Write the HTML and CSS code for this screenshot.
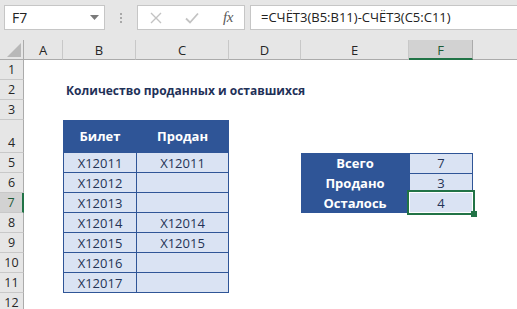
FILE: index.html
```html
<!DOCTYPE html>
<html lang="ru">
<head>
<meta charset="utf-8">
<title>Excel</title>
<link rel="stylesheet" href="styles.css">
</head>
<body>
<div class="app">
  <div class="fbar">
    <div class="namebox"><span>F7</span>
      <svg class="dd" width="9" height="5" viewBox="0 0 9 5"><path d="M0 0H9L4.5 5Z" fill="#7a7a7a"/></svg>
    </div>
    <div class="grip"><i></i><i></i><i></i></div>
    <div class="fbtns">
      <svg class="ic-x" width="12" height="12" viewBox="0 0 12 12"><path d="M1 1L11 11M11 1L1 11" stroke="#c3c3c3" stroke-width="1.4" fill="none"/></svg>
      <svg class="ic-ok" width="14" height="12" viewBox="0 0 14 12"><path d="M1 6.5L5 10.5L13 1.5" stroke="#c3c3c3" stroke-width="1.8" fill="none"/></svg>
      <span class="fx">fx</span>
    </div>
    <div class="finput">=СЧЁТ3(B5:B11)-СЧЁТ3(C5:C11)</div>
  </div>

  <div class="sheet">
    <div class="corner"><svg width="14" height="14" viewBox="0 0 14 14"><path d="M14 0V14H0Z" fill="#b8b8b8"/></svg></div>
    <div class="ch c-a">A</div>
    <div class="ch c-b">B</div>
    <div class="ch c-c">C</div>
    <div class="ch c-d">D</div>
    <div class="ch c-e">E</div>
    <div class="ch c-f ch-sel">F</div>
    <div class="ch c-g ch-last"></div>

    <div class="rh r1">1</div>
    <div class="rh r2">2</div>
    <div class="rh r3">3</div>
    <div class="rh r4">4</div>
    <div class="rh r5">5</div>
    <div class="rh r6">6</div>
    <div class="rh r7 rh-sel">7</div>
    <div class="rh r8">8</div>
    <div class="rh r9">9</div>
    <div class="rh r10">10</div>
    <div class="rh r11">11</div>
    <div class="rh r12">12</div>

    <div class="title">Количество проданных и оставшихся</div>

    <div class="tickets">
      <div class="th">Билет</div>
      <div class="th">Продан</div>
      <div class="td">X12011</div><div class="td">X12011</div>
      <div class="td">X12012</div><div class="td"></div>
      <div class="td">X12013</div><div class="td"></div>
      <div class="td">X12014</div><div class="td">X12014</div>
      <div class="td">X12015</div><div class="td">X12015</div>
      <div class="td">X12016</div><div class="td"></div>
      <div class="td">X12017</div><div class="td"></div>
    </div>

    <div class="summary">
      <div class="lbl">Всего</div><div class="val">7</div>
      <div class="lbl">Продано</div><div class="val">3</div>
      <div class="lbl">Осталось</div><div class="val sel">4</div>
    </div>
  </div>
</div>
</body>
</html>
```
FILE: styles.css
```css
* { box-sizing: border-box; }
html, body { margin: 0; padding: 0; }
body {
  width: 517px;
  height: 309px;
  overflow: hidden;
  background: #ffffff;
  font-family: "Open Sans", "Noto Sans", sans-serif;
}

.app { width: 517px; }

/* formula bar */
.fbar {
  display: flex;
  align-items: flex-start;
  height: 40px;
  padding-top: 5px;
  background: #e6e6e6;
}
.namebox {
  margin-left: 4px;
  width: 101px;
  height: 25px;
  border: 1px solid #c6c6c6;
  background: #fff;
  display: flex;
  align-items: center;
  padding-left: 7px;
  font-size: 14px;
  color: #222;
}
.namebox .dd { margin-left: auto; margin-right: 5px; }
.grip {
  width: 32px;
  height: 25px;
  display: flex;
  flex-direction: column;
  align-items: center;
  justify-content: center;
  gap: 2px;
}
.grip i {
  display: block;
  width: 2px;
  height: 2px;
  background: #a8a8a8;
}
.fbtns {
  width: 108px;
  height: 25px;
  border: 1px solid #c6c6c6;
  background: #fff;
  display: flex;
  align-items: center;
  padding-left: 12px;
}
.ic-ok { margin-left: 23px; }
.fx {
  margin-left: 24px;
  font-family: "Liberation Serif", "DejaVu Serif", serif;
  font-style: italic;
  font-size: 15px;
  color: #5a5a5a;
  letter-spacing: -0.5px;
}
.finput {
  flex: 1;
  margin-left: 5px;
  height: 25px;
  border: 1px solid #c6c6c6;
  border-right: none;
  background: #fff;
  padding-left: 10px;
  font-size: 13px;
  line-height: 22px;
  color: #222;
  white-space: nowrap;
}

/* sheet grid */
.sheet {
  display: grid;
  grid-template-columns: 24px 39px 73px 93px 72px 108px 64px 1fr;
  grid-template-rows: 20px 20px 20px 20px 33px repeat(8, 20px);
  background: #fff;
}
.corner {
  grid-column: 1;
  grid-row: 1;
  background: #e6e6e6;
  border-right: 1px solid #ababab;
  border-bottom: 1px solid #ababab;
  display: flex;
  align-items: flex-end;
  justify-content: flex-end;
  padding: 0 2px 2px 0;
}
.ch {
  grid-row: 1;
  background: #e6e6e6;
  border-right: 1px solid #c8c8c8;
  border-bottom: 1px solid #ababab;
  display: flex;
  align-items: center;
  justify-content: center;
  font-size: 13px;
  color: #262626;
  padding-top: 1px;
}
.c-a { grid-column: 2; }
.c-b { grid-column: 3; }
.c-c { grid-column: 4; }
.c-d { grid-column: 5; }
.c-e { grid-column: 6; }
.c-f { grid-column: 7; }
.c-g { grid-column: 8; }
.ch-last { border-right: none; }
.ch-sel {
  background: #d2d2d2;
  color: #1d5b37;
  border-bottom: 2px solid #217346;
  border-right-color: #ababab;
}

.rh {
  grid-column: 1;
  background: #e6e6e6;
  border-right: 1px solid #ababab;
  border-bottom: 1px solid #c8c8c8;
  display: flex;
  align-items: flex-end;
  justify-content: center;
  font-size: 12.5px;
  line-height: 18px;
  color: #262626;
}
.r1 { grid-row: 2; }
.r2 { grid-row: 3; }
.r3 { grid-row: 4; }
.r4 { grid-row: 5; }
.r5 { grid-row: 6; }
.r6 { grid-row: 7; }
.r7 { grid-row: 8; }
.r8 { grid-row: 9; }
.r9 { grid-row: 10; }
.r10 { grid-row: 11; }
.r11 { grid-row: 12; }
.r12 { grid-row: 13; }
.rh-sel {
  background: #d2d2d2;
  color: #1d5b37;
  border-right: 2px solid #217346;
}

/* title */
.title {
  grid-column: 3 / 9;
  grid-row: 3;
  display: flex;
  align-items: center;
  padding-left: 3px;
  font-size: 12px;
  font-weight: 700;
  color: #1f3158;
  white-space: nowrap;
}

/* tickets table */
.tickets {
  grid-column: 3 / 5;
  grid-row: 5 / 13;
  display: grid;
  grid-template-columns: 72px 91px;
  grid-template-rows: 32px repeat(7, 19px);
  gap: 1px;
  padding: 0 1px 1px 1px;
  background: #2f5597;
}
.th, .td {
  display: flex;
  align-items: center;
  justify-content: center;
  font-size: 13px;
  white-space: nowrap;
}
.th {
  background: #2f5597;
  color: #fff;
  font-weight: 700;
}
.td {
  background: #dae3f3;
  color: #253456;
}

/* summary table */
.summary {
  grid-column: 6 / 8;
  grid-row: 6 / 9;
  display: grid;
  grid-template-columns: 1fr 62px;
  grid-template-rows: repeat(3, 1fr);
  gap: 1px;
  padding: 1px 1px 1px 0;
  background: #2f5597;
}
.lbl, .val {
  display: flex;
  align-items: center;
  justify-content: center;
  font-size: 13px;
}
.lbl {
  background: #2f5597;
  color: #fff;
  font-weight: 700;
}
.val {
  background: #dae3f3;
  color: #253456;
}
.val.sel { position: relative; }
.val.sel::after {
  content: "";
  position: absolute;
  left: -3px;
  right: -3px;
  top: -3px;
  bottom: -3px;
  border: 2px solid #217346;
  box-shadow: inset 0 0 0 1px #fff;
}
.val.sel::before {
  content: "";
  position: absolute;
  right: -5px;
  bottom: -5px;
  width: 6px;
  height: 6px;
  background: #217346;
  z-index: 1;
}
```
